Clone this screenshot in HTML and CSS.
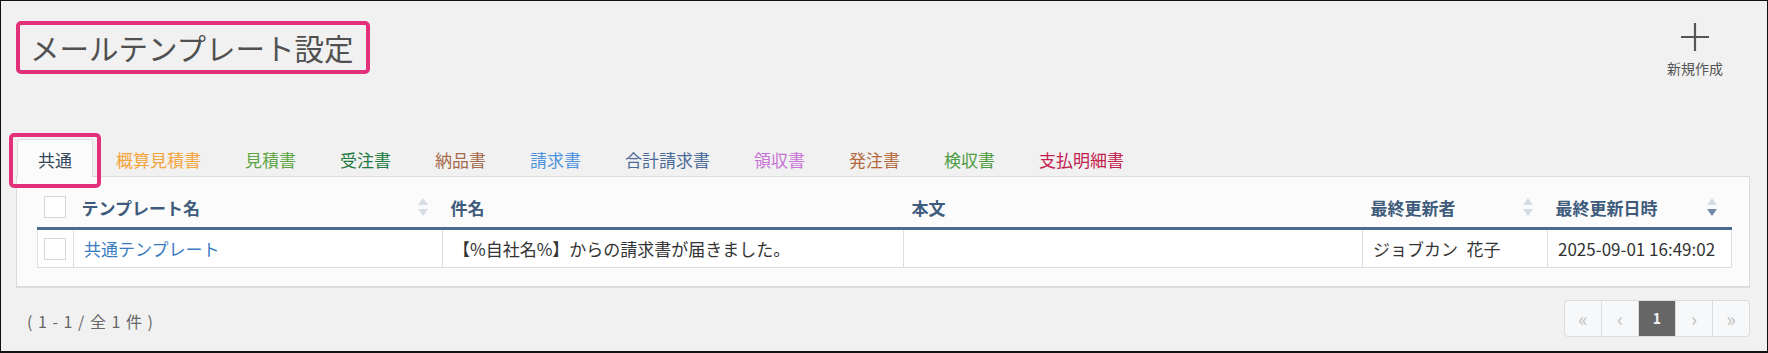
FILE: index.html
```html
<!DOCTYPE html>
<html lang="ja">
<head>
    <meta charset="UTF-8">
    <title>メールテンプレート設定</title>
    <link rel="stylesheet" href="styles.css">
</head>
<body>
    <div class="frame">
        <div class="page-head">
            <h1 class="page-title">メールテンプレート設定</h1>
            <a class="new-btn" href="#">
                <svg width="30" height="30" viewBox="0 0 30 30">
                    <path d="M15 1V29M1 15H29" stroke="#555" stroke-width="2.2" fill="none"/>
                </svg>
                <span>新規作成</span>
            </a>
        </div>

        <!-- document type tabs -->
        <ul class="tabs">
            <li class="tab active" style="color:#34465a">共通<span class="mark"></span></li>
            <li class="tab" style="color:#f3a43a">概算見積書</li>
            <li class="tab" style="color:#5da543">見積書</li>
            <li class="tab" style="color:#1f7a43">受注書</li>
            <li class="tab" style="color:#a66a4c">納品書</li>
            <li class="tab" style="color:#4d93dc">請求書</li>
            <li class="tab" style="color:#4b6a97">合計請求書</li>
            <li class="tab" style="color:#c774d6">領収書</li>
            <li class="tab" style="color:#b46a3d">発注書</li>
            <li class="tab" style="color:#4e9c41">検収書</li>
            <li class="tab" style="color:#c3224f">支払明細書</li>
        </ul>

        <div class="panel">
            <table class="list">
                <colgroup>
                    <col style="width:36px">
                    <col style="width:369px">
                    <col style="width:461px">
                    <col style="width:459px">
                    <col style="width:185px">
                    <col style="width:184px">
                </colgroup>
                <thead>
                    <tr>
                        <th class="chk"><span class="box"></span></th>
                        <th class="sortable">テンプレート名
                            <svg class="sort" width="10" height="18" viewBox="0 0 10 18"><path d="M5 0L10 7H0Z" fill="#d6dde5"/><path d="M5 18L10 11H0Z" fill="#d6dde5"/></svg>
                        </th>
                        <th>件名</th>
                        <th>本文</th>
                        <th class="sortable">最終更新者
                            <svg class="sort" width="10" height="18" viewBox="0 0 10 18"><path d="M5 0L10 7H0Z" fill="#d6dde5"/><path d="M5 18L10 11H0Z" fill="#d6dde5"/></svg>
                        </th>
                        <th class="sortable">最終更新日時
                            <svg class="sort" width="10" height="18" viewBox="0 0 10 18"><path d="M5 0L10 7H0Z" fill="#d6dde5"/><path d="M5 18L10 11H0Z" fill="#7189a6"/></svg>
                        </th>
                    </tr>
                </thead>
                <tbody>
                    <tr>
                        <td class="chk"><span class="box"></span></td>
                        <td><a href="#">共通テンプレート</a></td>
                        <td>【%自社名%】からの請求書が届きました。</td>
                        <td></td>
                        <td>ジョブカン&ensp;花子</td>
                        <td>2025-09-01 16:49:02</td>
                    </tr>
                </tbody>
            </table>
        </div>

        <div class="list-foot">
            <span class="count">( 1 - 1 / 全 1 件 )</span>
            <div class="pager">
                <span class="pg">«</span>
                <span class="pg">‹</span>
                <span class="pg current">1</span>
                <span class="pg">›</span>
                <span class="pg">»</span>
            </div>
        </div>
    </div>
</body>
</html>
```

FILE: styles.css
```css
body {
    margin: 0;
    font-family: "Noto Sans CJK JP", "Noto Sans", sans-serif;
    color: #333;
}
.frame {
    height: 353px;
    box-sizing: border-box;
    border: 1px solid #111;
    border-bottom-width: 2px;
    background: #f1f1f1;
    padding: 20px 17px 0 15px;
}
.page-head {
    display: flex;
    justify-content: space-between;
    align-items: flex-start;
    height: 60px;
}
.page-title {
    margin: 0;
    width: 354px;
    height: 53px;
    box-sizing: border-box;
    border: 4px solid #e2307a;
    border-radius: 5px;
    padding-left: 10px;
    font-size: 29.5px;
    font-weight: 400;
    line-height: 44px;
    color: #505050;
    white-space: nowrap;
}
.new-btn {
    width: 70px;
    margin: 1px 20px 0 0;
    display: flex;
    flex-direction: column;
    align-items: center;
    color: #555;
    text-decoration: none;
    font-size: 14px;
    line-height: 20px;
}
.new-btn svg {
    display: block;
    margin-bottom: 6px;
}

.tabs {
    list-style: none;
    margin: 58px 0 0 0;
    padding: 0 0 0 1px;
    display: flex;
    border-bottom: 1px solid #dcdcdc;
}
.tab {
    position: relative;
    height: 37px;
    box-sizing: border-box;
    padding: 4px 20px 0;
    margin: 0 2px -1px 0;
    border: 1px solid transparent;
    border-bottom: none;
    border-radius: 3px 3px 0 0;
    font-size: 17px;
    line-height: 32px;
    white-space: nowrap;
}
.tab.active {
    background: #fbfbfb;
    border-color: #dcdcdc;
    height: 38px;
}
/* pink highlight around the selected tab */
.tab .mark {
    position: absolute;
    left: -9px;
    right: -9px;
    top: -7px;
    bottom: -11px;
    border: 4px solid #e2307a;
    border-radius: 5px;
}

.panel {
    background: #fbfbfb;
    border: 1px solid #dcdcdc;
    border-top: none;
    border-bottom-width: 2px;
    padding: 10px 18px 18px 20px;
}
.list {
    width: 1694px;
    table-layout: fixed;
    border-collapse: collapse;
    font-size: 17px;
}
.list th {
    height: 40px;
    padding: 0 8px;
    text-align: left;
    font-size: 17px;
    font-weight: 700;
    color: #3f5b7c;
    border-bottom: 3px solid #4a6a8f;
    white-space: nowrap;
}
.list th.sortable {
    position: relative;
}
.list th .sort {
    position: absolute;
    right: 15px;
    top: 11px;
}
.list td {
    height: 37px;
    padding: 0 10px;
    border: 1px solid #dedede;
    border-top: none;
    background: #fff;
    white-space: nowrap;
    color: #333;
}
.list td a {
    color: #3b7bbf;
    text-decoration: none;
}
.list .chk {
    padding: 0 0 0 6px;
}
.box {
    display: block;
    width: 20px;
    height: 20px;
    border: 1px solid #d7d7d7;
    background: #fff;
}

.list-foot {
    display: flex;
    justify-content: space-between;
    align-items: center;
    margin-top: 12px;
}
.count {
    padding: 4px 0 0 11px;
    font-size: 16px;
    letter-spacing: 1px;
    color: #666;
}
.pager {
    display: flex;
    border: 1px solid #dcdcdc;
    border-radius: 4px;
    overflow: hidden;
    background: #f6f8f9;
}
.pg {
    width: 36px;
    height: 35px;
    line-height: 35px;
    text-align: center;
    font-size: 20px;
    color: #c2c2c2;
    border-left: 1px solid #dcdcdc;
}
.pg:first-child {
    border-left: none;
}
.pg.current {
    background: #666;
    color: #f4f4f4;
    font-size: 14px;
    font-weight: 700;
}
```
